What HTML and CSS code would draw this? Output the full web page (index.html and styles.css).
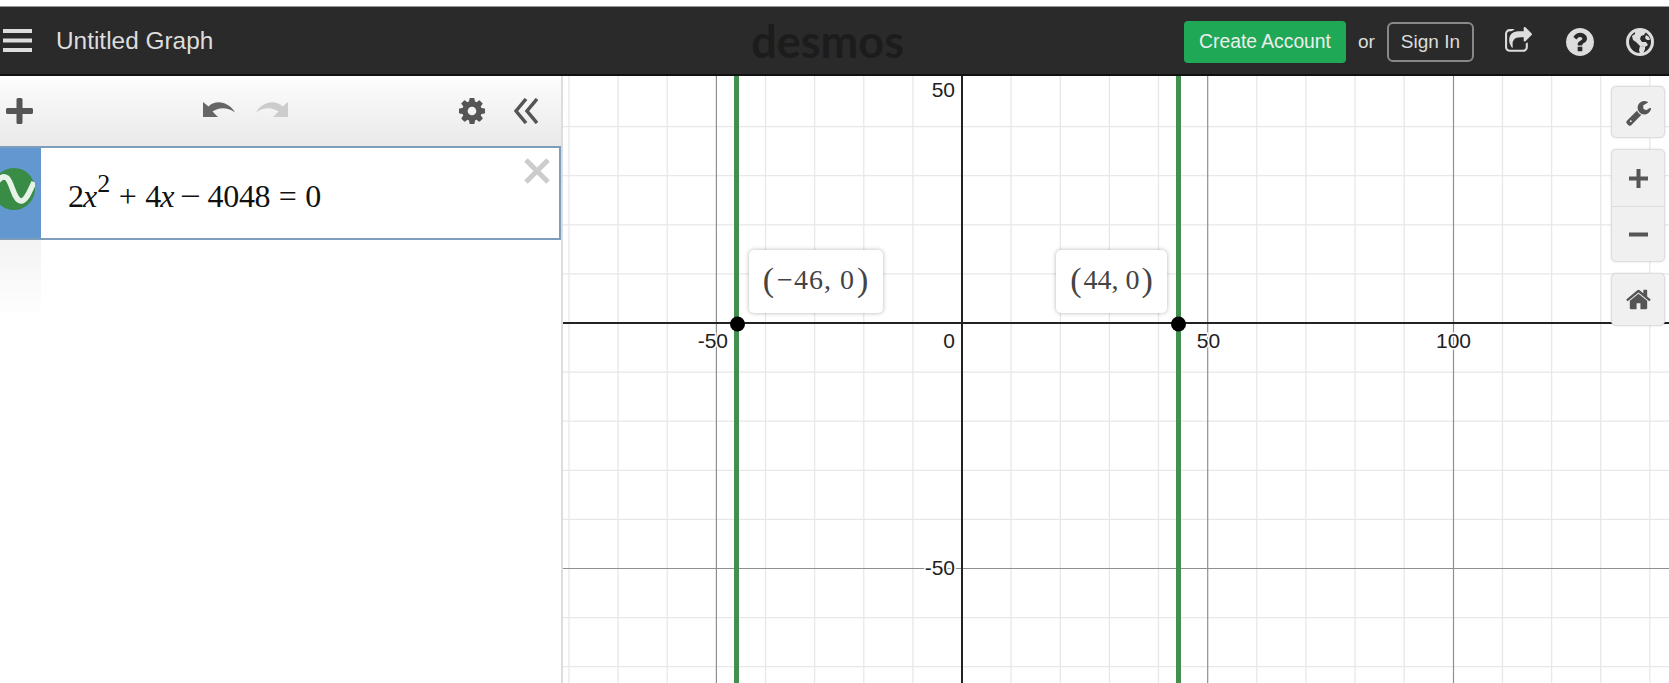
FILE: index.html
```html
<!DOCTYPE html>
<html lang="en">
<head>
    <meta charset="utf-8">
    <title>Untitled Graph</title>
    <link rel="stylesheet" href="styles.css">
</head>
<body>
<header class="topbar">
    <svg class="hamburger" viewBox="0 0 29 23"><path d="M0 0h29v4H0zM0 9.500h29v4H0zM0 19h29v4H0z"/></svg>
    <span class="title">Untitled Graph</span>
    <span class="logo">desmos</span>
    <div class="account">
        <a class="create">Create Account</a>
        <span class="or">or</span>
        <a class="signin">Sign In</a>
        <svg class="top-icon share" viewBox="0 0 1792 1792"><path d="M1472 989v259q0 119-84.500 203.500t-203.500 84.500h-832q-119 0-203.500-84.500t-84.500-203.500v-832q0-119 84.500-203.500t203.500-84.500h255q13 0 22.500 9.500t9.500 22.500q0 27-26 32-77 26-133 60-10 4-16 4h-112q-66 0-113 47t-47 113v832q0 66 47 113t113 47h832q66 0 113-47t47-113v-214q0-19 18-29 28-13 54-37 16-16 35-8 21 9 21 29zm237-496l-384 384q-18 19-45 19-12 0-25-5-39-17-39-59v-192h-160q-323 0-438 131-119 137-74 473 3 23-20 34-8 2-12 2-16 0-26-13-10-14-21-31t-39.500-68.500-49.500-99.500-38.500-114-17.500-122q0-49 3.500-91t14-90 28-88 47-81.500 68.500-74 94.500-61.500 124.500-48.500 159.500-30.500 196.500-11h160v-192q0-42 39-59 13-5 25-5 26 0 45 19l384 384q19 19 19 45t-19 45z"/></svg>
        <svg class="top-icon help" viewBox="128 128 1536 1536"><path d="M1024 1376v-192q0-14-9-23t-23-9h-192q-14 0-23 9t-9 23v192q0 14 9 23t23 9h192q14 0 23-9t9-23zm256-672q0-88-55.500-163t-138.500-116-170-41q-243 0-371 213-15 24 8 42l132 100q7 6 19 6 16 0 25-12 53-68 86-92 34-24 86-24 48 0 85.500 26t37.500 59q0 38-20 61t-68 45q-63 28-115.500 86.500t-52.500 125.500v36q0 14 9 23t23 9h192q14 0 23-9t9-23q0-19 21.500-49.500t54.500-49.500q32-18 49-28.500t46-35 44.500-48 28-60.500 12.500-81zm384 192q0 209-103 385.500t-279.500 279.500-385.500 103-385.500-103-279.500-279.500-103-385.500 103-385.500 279.500-279.500 385.500-103 385.500 103 279.500 279.500 103 385.500z"/></svg>
        <svg class="top-icon globe" viewBox="0 0 28 28">
            <circle cx="14" cy="14" r="12.500" fill="none" stroke="#ddd" stroke-width="3"/>
            <path d="M9 3l7-1 4 2-2 3-3 1-1 3 2 3 4 0 2 3-3 2-5-1-4-4-3-2-1-4 3-2z"/>
            <path d="M14 18l5 1 0 2-2 5-3 0-1-4z"/>
            <path d="M20 7l3 2 1 3-3 0-2-2z"/>
        </svg>
    </div>
</header>

<div class="main">
    <aside class="panel">
        <div class="toolbar">
            <svg class="plus" viewBox="0 0 27 26"><path d="M10.500 1.500q0-1.500 1.500-1.500h3q1.500 0 1.500 1.500V10h9q1.500 0 1.500 1.500v3q0 1.500-1.500 1.500h-9v8.500q0 1.500-1.500 1.500h-3q-1.500 0-1.500-1.500V16h-9Q0 16 0 14.500v-3Q0 10 1.500 10h9z"/></svg>
            <svg class="undo" viewBox="0 0 33 19"><path d="M1 3v15h15l-5.500-5.500C16 8.500 25 7.500 33 13.500 27 3 14 0 6.500 7.500z"/></svg>
            <svg class="undo redo" viewBox="0 0 33 19"><path d="M1 3v15h15l-5.500-5.500C16 8.500 25 7.500 33 13.500 27 3 14 0 6.500 7.500z"/></svg>
            <svg class="gear" viewBox="128 128 1536 1536"><path d="M1152 896q0-106-75-181t-181-75-181 75-75 181 75 181 181 75 181-75 75-181zm512-109v222q0 12-8 23t-20 13l-185 28q-19 54-39 91 35 50 107 138 10 12 10 25t-9 23q-27 37-99 108t-94 71q-12 0-26-9l-138-108q-44 23-91 38-16 136-29 186-7 28-36 28h-222q-14 0-24.500-8.500t-11.500-21.500l-28-184q-49-16-90-37l-141 107q-10 9-25 9-14 0-25-11-126-114-165-168-7-10-7-23 0-12 8-23 15-21 51-66.500t54-70.500q-27-50-41-99l-183-27q-13-2-21-12.500t-8-23.500v-222q0-12 8-23t19-13l186-28q14-46 39-92-40-57-107-138-10-12-10-24 0-10 9-23 26-36 98.500-107.500t94.500-71.500q13 0 26 10l138 107q44-23 91-38 16-136 29-186 7-28 36-28h222q14 0 24.500 8.500t11.500 21.500l28 184q49 16 90 37l142-107q9-9 24-9 13 0 25 10 129 119 165 170 7 8 7 22 0 12-8 23-15 21-51 66.500t-54 70.500q26 50 41 98l183 28q13 2 21 12.500t8 23.500z"/></svg>
            <svg class="collapse" viewBox="0 0 24 26"><path d="M12 1L2 13l10 12M23 1L13 13l10 12"/></svg>
        </div>

        <div class="expression">
            <div class="expression-tab">
                <svg class="wave" viewBox="0 0 42 42">
                    <circle cx="21" cy="21" r="21"/>
                    <path d="M2 18C6 10 10 7 14 10 19 14 21 33 28 33 33 33 37 23 41 14"/>
                </svg>
            </div>
            <div class="math"><span>2<i>x</i><sup>2</sup></span><span class="op">+</span><span>4<i>x</i></span><span class="op minus">−</span><span class="digits">4048</span><span class="op">=</span><span>0</span></div>
            <svg class="remove" viewBox="0 0 28 28"><path d="M3 3l22 22M25 3L3 25"/></svg>
        </div>
        <div class="empty-tab"></div>
    </aside>

    <section class="graph">
        <svg class="plot" viewBox="0 0 1106 607">
            <path class="minor" d="M6 0V607M55.100 0V607M104.200 0V607M202.500 0V607M251.600 0V607M300.800 0V607M349.900 0V607M448.100 0V607M497.300 0V607M546.400 0V607M595.500 0V607M693.800 0V607M742.900 0V607M792 0V607M841.200 0V607M939.500 0V607M988.600 0V607M1037.700 0V607M1086.800 0V607"/>
            <path class="minor" d="M0 50.600H1106M0 99.700H1106M0 148.800H1106M0 197.900H1106M0 296.100H1106M0 345.200H1106M0 394.300H1106M0 443.400H1106M0 541.600H1106M0 590.700H1106"/>
            <path class="major" d="M153.400 0V607M644.700 0V607M890.500 0V607M0 492.500H1106"/>
            <path class="axis" d="M399 0V607M0 247H1106"/>
            <path class="curve" d="M173.500 0V607M615.500 0V607"/>
            <circle class="point" cx="174.500" cy="248" r="7.500"/>
            <circle class="point" cx="615.500" cy="248" r="7.500"/>
            <text class="tick" x="165" y="272" text-anchor="end">-50</text>
            <text class="tick" x="392" y="272" text-anchor="end">0</text>
            <text class="tick" x="645.500" y="272" text-anchor="middle">50</text>
            <text class="tick" x="890.500" y="272" text-anchor="middle">100</text>
            <text class="tick" x="392" y="499" text-anchor="end">-50</text>
            <text class="tick" x="392" y="21" text-anchor="end">50</text>
        </svg>

        <div class="point-label label-left"><span class="paren">(</span>−46, 0<span class="paren">)</span></div>
        <div class="point-label label-right"><span class="paren">(</span>44, 0<span class="paren">)</span></div>

        <div class="controls">
            <div class="control single">
                <svg viewBox="0 0 1792 1792"><path d="M448 1472q0-26-19-45t-45-19-45 19-19 45 19 45 45 19 45-19 19-45zm644-420l-682 682q-37 37-90 37-52 0-91-37l-106-108q-38-36-38-90 0-53 38-91l681-681q39 98 114.500 173.500t173.500 114.500zm634-435q0 39-23 106-47 134-164.500 217.500t-258.500 83.500q-185 0-316.500-131.500t-131.500-316.500 131.500-316.500 316.500-131.500q58 0 121.500 16.500t107.500 46.500q16 11 16 28t-16 28l-293 169v224l193 107q5-3 79-48.500t135.500-81 70.500-35.500q15 0 23.500 10t8.500 25z"/></svg>
            </div>
            <div class="control zoom">
                <div class="zoom-half"><svg viewBox="0 0 19 19"><path d="M7.500 0h4v7.500H19v4h-7.500V19h-4v-7.500H0v-4h7.500z"/></svg></div>
                <div class="zoom-half"><svg viewBox="0 0 19 19"><path d="M0 7.500h19v4H0z"/></svg></div>
            </div>
            <div class="control single home">
                <svg viewBox="0 0 1792 1792"><path d="M1472 992v480q0 26-19 45t-45 19h-384v-384h-256v384h-384q-26 0-45-19t-19-45v-480q0-1 .5-3t.5-3l575-474 575 474q1 2 1 6zm223-69l-62 74q-8 9-21 11h-3q-13 0-21-7l-692-577-692 577q-12 8-24 7-13-2-21-11l-62-74q-8-10-7-23.500t11-21.500l719-599q32-26 76-26t76 26l244 204v-195q0-14 9-23t23-9h192q14 0 23 9t9 23v408l219 182q10 8 11 21.500t-7 23.500z"/></svg>
            </div>
        </div>
    </section>
</div>
</body>
</html>
```

FILE: styles.css
```css
html, body {
    height: 100%;
    margin: 0;
    overflow: hidden;
    background: white;
    font-family: "Liberation Sans", Arial, sans-serif;
}

/* top bar */
.topbar {
    display: flex;
    align-items: center;
    box-sizing: border-box;
    height: 70px;
    margin-top: 6px;
    padding-left: 3px;
    background: #2a2a2a;
    border-top: 1px solid #999;
    border-bottom: 2px solid #111;
    color: #ddd;
}
.hamburger {
    width: 29px;
    height: 23px;
    fill: #ddd;
}
.title {
    margin-left: 24px;
    font-size: 24.4px;
}
.logo {
    margin-left: 538px;
    font-family: Lato, sans-serif;
    font-weight: 700;
    font-size: 45px;
    color: #1c1c1c;
}
.account {
    display: flex;
    align-items: center;
    margin-left: auto;
    padding: 2px 15px 0 0;
}
.create {
    padding: 0 15px;
    height: 42px;
    line-height: 42px;
    border-radius: 4px;
    background: #1fa855;
    color: #eee;
    font-size: 19.300px;
}
.or {
    margin: 0 12px;
    font-size: 19px;
}
.signin {
    box-sizing: border-box;
    height: 40px;
    padding: 0 12px;
    line-height: 36px;
    border: 2px solid #888;
    border-radius: 6px;
    font-size: 19px;
}
.top-icon {
    width: 28px;
    height: 28px;
    margin-left: 32px;
    fill: #ddd;
}
.top-icon.share {
    width: 29px;
    height: 29px;
    margin-right: 1px;
    margin-left: 30px;
}
.globe path {
    fill: #ddd;
}

.main {
    display: flex;
    height: 607px;
}

/* expression panel */
.panel {
    box-sizing: border-box;
    width: 563px;
    flex-shrink: 0;
    border-right: 2px solid #ddd;
}
.toolbar {
    display: flex;
    align-items: center;
    box-sizing: border-box;
    height: 70px;
    padding: 0 23px 0 6px;
    background: linear-gradient(#fdfdfd, #e9e9e9);
}
.plus {
    width: 27px;
    height: 26px;
    fill: #555;
}
.undo {
    width: 33px;
    height: 19px;
    margin-left: 169px;
    margin-bottom: 6px;
    fill: #666;
}
.redo {
    margin-left: 21px;
    fill: #ccc;
    transform: scaleX(-1);
}
.gear {
    width: 26px;
    height: 26px;
    margin-left: auto;
    fill: #555;
}
.collapse {
    width: 24px;
    height: 26px;
    margin-left: 29px;
    fill: none;
    stroke: #555;
    stroke-width: 3.500;
}
.expression {
    position: relative;
    display: flex;
    box-sizing: border-box;
    height: 94px;
    border: solid #7e9dba;
    border-width: 2px 2px 2px 0;
    background: white;
}
.expression-tab {
    width: 41px;
    overflow: hidden;
    background: #6298cf;
}
.wave {
    display: block;
    width: 42px;
    height: 42px;
    margin: 20px 0 0 -7px;
}
.wave circle {
    fill: #388c46;
}
.wave path {
    fill: none;
    stroke: #e8f3e8;
    stroke-width: 5.500;
}
.math {
    display: flex;
    margin: 30px 0 0 27px;
    font-family: "Liberation Serif", serif;
    font-size: 32px;
    line-height: 36px;
    color: #111;
}
.math sup {
    font-size: 26px;
    line-height: 0;
    vertical-align: 15px;
}
.math i {
    margin-left: -1px;
}
.op {
    margin: 0 8.500px;
}
.minus {
    margin: 0 8px 0 7px;
    transform: scaleX(1.15);
}
.digits {
    letter-spacing: -0.300px;
}
.remove {
    position: absolute;
    top: 9px;
    right: 8px;
    width: 28px;
    height: 28px;
    fill: none;
    stroke: #ccc;
    stroke-width: 5;
}
.empty-tab {
    width: 41px;
    height: 78px;
    background: linear-gradient(#f3f3f3, white);
}

/* graph */
.graph {
    position: relative;
    flex: 1;
    overflow: hidden;
}
.plot {
    display: block;
    width: 1106px;
    height: 607px;
}
.plot path {
    fill: none;
}
.minor {
    stroke: #e8e8e8;
    stroke-width: 1.300;
}
.major {
    stroke: #8f8f8f;
    stroke-width: 1.200;
}
.axis {
    stroke: #222;
    stroke-width: 2;
}
.curve {
    stroke: #428f50;
    stroke-width: 5;
}
.point {
    fill: #000;
}
.tick {
    font-size: 21px;
    fill: #222;
    stroke: white;
    stroke-width: 3px;
    paint-order: stroke;
}
.point-label {
    position: absolute;
    top: 174px;
    display: flex;
    align-items: center;
    justify-content: center;
    box-sizing: border-box;
    height: 63px;
    padding-bottom: 3px;
    border-radius: 5px;
    background: white;
    box-shadow: 0 0 4px rgba(0, 0, 0, 0.3);
    font-family: "Liberation Serif", serif;
    font-size: 28px;
    letter-spacing: 1px;
    color: #444;
}
.paren {
    font-size: 34px;
    margin: 0 2px;
}
.label-left {
    left: 186px;
    width: 134px;
}
.label-right {
    left: 493px;
    width: 111px;
    letter-spacing: 0;
}
.controls {
    position: absolute;
    top: 10px;
    right: 4px;
    display: flex;
    flex-direction: column;
    gap: 11px;
    width: 54px;
}
.control {
    box-sizing: border-box;
    border: 1px solid #ddd;
    border-radius: 5px;
    background: #f0f0f0;
    box-shadow: 0 0 2px rgba(0, 0, 0, 0.15);
}
.control svg {
    display: block;
    fill: #555;
}
.control.single {
    display: flex;
    align-items: center;
    justify-content: center;
    height: 52px;
}
.control.single svg {
    width: 27px;
    height: 27px;
}
.control.home {
    height: 53px;
}
.zoom-half {
    display: flex;
    align-items: center;
    justify-content: center;
    box-sizing: border-box;
    height: 55.500px;
    padding-top: 2px;
}
.zoom-half + .zoom-half {
    border-top: 1px solid #ddd;
}
.zoom-half svg {
    width: 19px;
    height: 19px;
}
```
